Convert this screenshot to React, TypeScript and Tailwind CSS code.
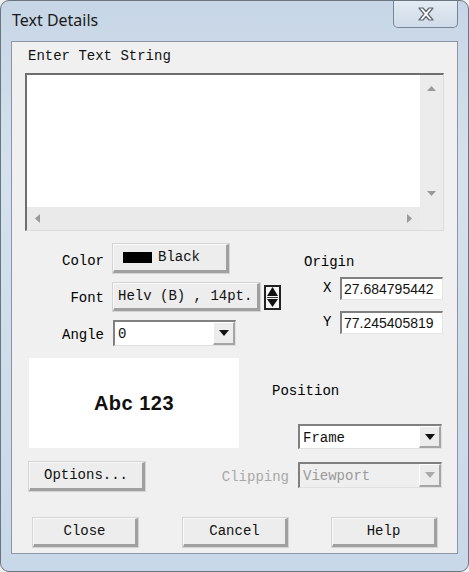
import React from 'react';

const mono = { fontFamily: '"Liberation Mono", "DejaVu Sans Mono", monospace' };

// classic raised 3D button
const Btn = ({ w, h, children, cls = '' }: { w: string; h: string; children: React.ReactNode; cls?: string }) => (
    <div
        className={`${w} ${h} ${cls} flex items-center bg-[#ededed] border-t border-l border-t-[#fafafa] border-l-[#fafafa] border-b-[3px] border-r-[3px] border-b-[#a0a0a0] border-r-[#a0a0a0] shadow-[0_0_0_1px_#d4d4d4] text-[14px] text-[#111]`}
    >
        {children}
    </div>
);

const Arrow = ({ disabled = false }: { disabled?: boolean }) => (
    <div className="w-[22px] h-full flex items-center justify-center bg-[#ececec] border-b-2 border-r-2 border-[#a5a5a5] border-t border-l border-t-white border-l-white">
        <svg width="10" height="6" viewBox="0 0 10 6">
            <path d="M0 0h10L5 6z" fill={disabled ? '#aaa' : '#111'} />
        </svg>
    </div>
);

const Select = ({ w, value, disabled = false }: { w: string; value: string; disabled?: boolean }) => (
    <div
        className={`${w} h-full flex items-stretch border-t-2 border-l-2 border-t-[#808080] border-l-[#808080] border-b border-r border-[#e0e0e0] ${disabled ? 'bg-[#efefef] text-[#9a9a9a]' : 'bg-white text-[#111]'}`}
    >
        <div className="flex-1 flex items-center pl-[3px] text-[14px] pt-[2px]" style={mono}>{value}</div>
        <Arrow disabled={disabled} />
    </div>
);

const Input = ({ value }: { value: string }) => (
    <div className="w-[103px] h-[23px] bg-white border-t-2 border-l-2 border-t-[#808080] border-l-[#808080] border-b border-r border-b-[#e4e4e4] border-r-[#e4e4e4] flex items-center pl-[2px] overflow-hidden whitespace-nowrap text-[14px] text-[#111] font-['Liberation_Sans',sans-serif]">
        {value}
    </div>
);

const App = () => {
    return (
        <div className="w-[469px] h-[572px] bg-[#f0f0f0] overflow-hidden">
            <div className="w-[469px] h-[572px] rounded-t-[9px] rounded-b-[9px] border border-[#6b7580] bg-[linear-gradient(180deg,#c7d6e6_0%,#d5e1ee_30%,#c9d8e8_100%)] flex flex-col">
                {/* title bar */}
                <div className="h-[40px] flex items-start relative">
                    <div className="pl-[11px] pt-[8px] text-[16px] text-[#1a1a1a] font-['Noto_Sans',sans-serif] leading-[22px]">Text Details</div>
                    <div className="absolute right-[10px] top-0 w-[65px] h-[27px] rounded-b-[5px] border border-t-0 border-[#7a8594] bg-[linear-gradient(180deg,#e3ebf3,#cfdbe8)] flex items-center justify-center">
                        <svg width="18" height="14" viewBox="0 0 18 14">
                            <path d="M2 1h4l3 3.5L12 1h4l-5 6 5 6h-4l-3-3.5L6 13H2l5-6z" fill="#fff" stroke="#5d6673" strokeWidth="1.2" strokeLinejoin="round" />
                        </svg>
                    </div>
                </div>

                {/* client area */}
                <div className="mx-[10px] h-[513px] border border-[#8a96a3] bg-[#f0f0f0] flex flex-col" style={mono}>
                    <div className="pl-[16px] pt-[5px] h-[24px] text-[14px] text-[#111] leading-[18px]">Enter Text String</div>

                    {/* text area */}
                    <div className="ml-[13px] mt-[7px] w-[419px] h-[158px] border-t-2 border-l-2 border-t-[#6e6e6e] border-l-[#6e6e6e] border-b border-r border-[#dcdcdc] bg-white flex">
                        <div className="flex-1 flex flex-col">
                            <div className="flex-1 bg-white"></div>
                            <div className="h-[23px] bg-[#eaeaea] flex items-center justify-between px-[8px]">
                                <svg width="5" height="9" viewBox="0 0 5 9"><path d="M5 0v9L0 4.5z" fill="#9a9a9a" /></svg>
                                <svg width="5" height="9" viewBox="0 0 5 9"><path d="M0 0v9l5-4.5z" fill="#9a9a9a" /></svg>
                            </div>
                        </div>
                        <div className="w-[23px] bg-[#ececec] flex flex-col">
                            <div className="flex-1 flex flex-col items-center justify-between pt-[11px] pb-[34px]">
                                <svg width="9" height="5" viewBox="0 0 9 5"><path d="M0 5h9L4.5 0z" fill="#9a9a9a" /></svg>
                                <svg width="9" height="5" viewBox="0 0 9 5"><path d="M0 0h9L4.5 5z" fill="#9a9a9a" /></svg>
                            </div>
                        </div>
                    </div>

                    {/* properties */}
                    <div className="mt-[13px] flex">
                        <div className="flex flex-col w-[280px]">
                            <div className="flex items-center h-[29px]">
                                <div className="w-[93px] text-right text-[14px] pr-[1px] pt-[5px]">Color</div>
                                <Btn w="w-[116px] ml-[8px]" h="h-[29px]">
                                    <div className="ml-[9px] w-[29px] h-[11px] bg-black"></div>
                                    <span className="ml-[6px]">Black</span>
                                </Btn>
                            </div>
                            <div className="flex items-center h-[28px] mt-[10px]">
                                <div className="w-[93px] text-right text-[14px] pr-[1px] pt-[3px]">Font</div>
                                <Btn w="w-[147px] ml-[8px]" h="h-[28px]">
                                    <span className="ml-[4px] whitespace-pre">Helv (B) , 14pt.</span>
                                </Btn>
                                <div className="ml-[4px] w-[17px] h-[25px] border-2 border-[#222] bg-[#f4f4f4] flex flex-col items-center justify-center gap-[1px]">
                                    <svg width="11" height="9" viewBox="0 0 11 9"><path d="M0 9h11L5.5 0z" fill="#111" /></svg>
                                    <div className="w-[11px] h-px bg-[#333]"></div>
                                    <svg width="11" height="8" viewBox="0 0 11 8"><path d="M0 0h11L5.5 8z" fill="#111" /></svg>
                                </div>
                            </div>
                            <div className="flex items-center h-[26px] mt-[9px]">
                                <div className="w-[93px] text-right text-[14px] pr-[1px] pt-[4px]">Angle</div>
                                <div className="ml-[8px] h-[26px]">
                                    <Select w="w-[123px]" value="0" />
                                </div>
                            </div>
                        </div>
                        <div className="flex flex-col">
                            <div className="ml-[12px] mt-[10px] text-[14px] leading-[16px]">Origin</div>
                            <div className="flex items-center mt-[7px]">
                                <span className="ml-[31px] w-[17px] text-[14px]">X</span>
                                <Input value="27.684795442" />
                            </div>
                            <div className="flex items-center mt-[11px]">
                                <span className="ml-[31px] w-[17px] text-[14px]">Y</span>
                                <Input value="77.245405819" />
                            </div>
                        </div>
                    </div>

                    {/* preview & position */}
                    <div className="mt-[12px] flex">
                        <div className="ml-[17px] w-[210px] h-[90px] bg-white flex items-center justify-center">
                            <span className="text-[20px] font-bold tracking-[0.5px] text-[#111] font-['Liberation_Sans',sans-serif]">Abc 123</span>
                        </div>
                        <div className="flex flex-col">
                            <div className="ml-[33px] mt-[24px] text-[14px] leading-[18px]">Position</div>
                            <div className="ml-[59px] mt-[24px] h-[25px]">
                                <Select w="w-[144px]" value="Frame" />
                            </div>
                        </div>
                    </div>

                    {/* options & clipping */}
                    <div className="mt-[12px] flex items-start">
                        <Btn w="w-[116px] ml-[17px] mt-[1px]" h="h-[29px]" cls="justify-center">
                            <span>Options...</span>
                        </Btn>
                        <div className="w-[144px] text-right text-[14px] text-[#a8a8a8] pt-[6px]">Clipping</div>
                        <div className="ml-[9px] mt-[1px] h-[26px]">
                            <Select w="w-[144px]" value="Viewport" disabled />
                        </div>
                    </div>

                    {/* bottom buttons */}
                    <div className="mt-[27px] flex">
                        <Btn w="w-[105px] ml-[21px]" h="h-[29px]" cls="justify-center"><span>Close</span></Btn>
                        <Btn w="w-[105px] ml-[45px]" h="h-[29px]" cls="justify-center"><span>Cancel</span></Btn>
                        <Btn w="w-[105px] ml-[44px]" h="h-[29px]" cls="justify-center"><span>Help</span></Btn>
                    </div>
                </div>
            </div>
        </div>
    );
};

export default App;
